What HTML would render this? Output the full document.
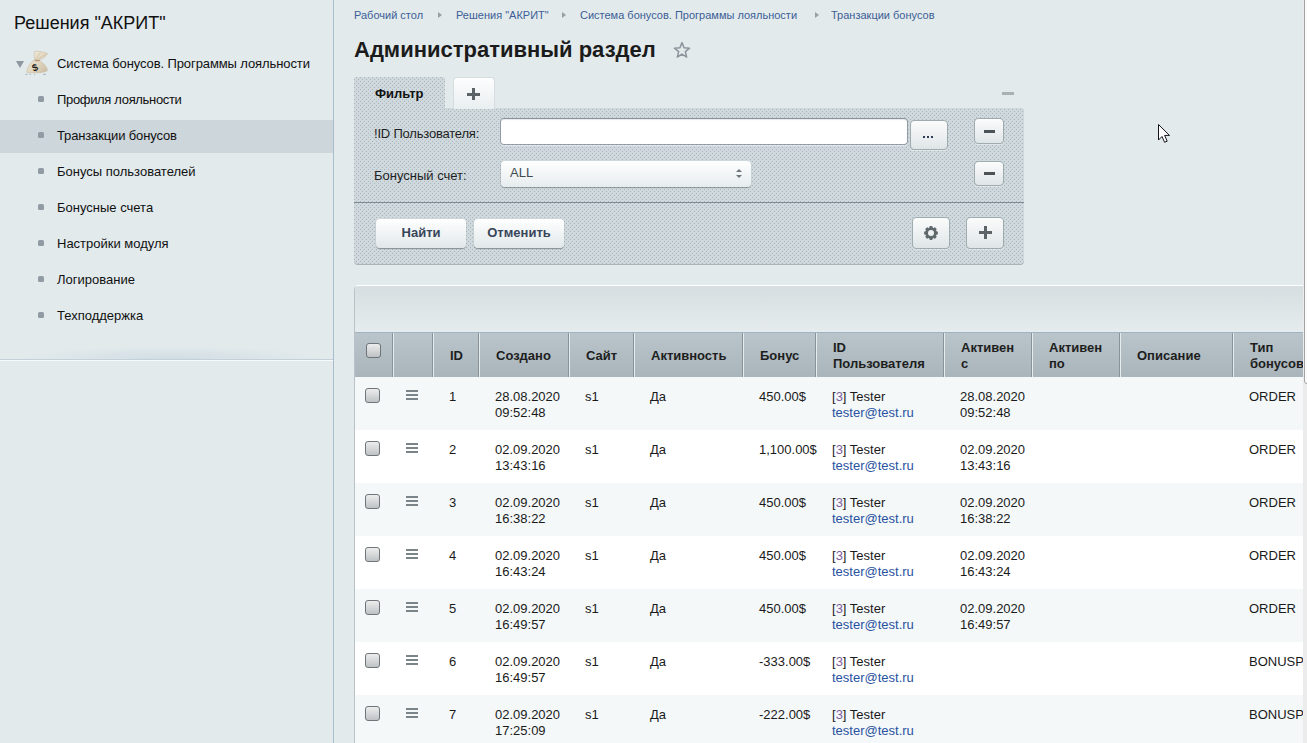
<!DOCTYPE html>
<html><head><meta charset="utf-8"><style>
*{box-sizing:border-box;margin:0;padding:0}
html,body{width:1307px;height:743px;overflow:hidden}
body{position:relative;background:#e2eaec;font-family:"Liberation Sans",sans-serif;font-size:13px;color:#000}
.abs{position:absolute}
#side{position:absolute;left:0;top:0;width:334px;height:743px;background:#e2eaec;border-right:1px solid #a9bccb}
#side .title{position:absolute;left:14px;top:12px;font-size:18px;line-height:22px;color:#111;white-space:nowrap}
.tri{position:absolute;left:16px;top:61px;width:0;height:0;border-left:4.5px solid transparent;border-right:4.5px solid transparent;border-top:7px solid #8e98a1}
#bag{position:absolute;left:25px;top:50px;width:25px;height:27px}
.mi{position:absolute;left:57px;white-space:nowrap;line-height:16px;color:#111}
.bul{position:absolute;left:38px;width:6px;height:6px;border-radius:1.5px;background:#909ba4}
#sel{position:absolute;left:0;top:120px;width:333px;height:33px;background:#cdd6db}
#sline{position:absolute;left:0;top:359px;width:333px;height:1px;background:#c3d0d8}
#sshadow{position:absolute;left:20px;top:346px;width:300px;height:13px;background:radial-gradient(ellipse 50% 100% at 50% 100%,rgba(150,175,195,.22),rgba(150,175,195,0))}
#sline2{position:absolute;left:0;top:360px;width:333px;height:1px;background:#f7fafb}
.bc{position:absolute;top:8px;font-size:11px;line-height:14px;color:#3d5e95;white-space:nowrap}
.bca{position:absolute;top:11.5px;width:0;height:0;border-top:3.5px solid transparent;border-bottom:3.5px solid transparent;border-left:4px solid #9a9fa3}
#h1{position:absolute;left:354px;top:37px;font-size:22px;font-weight:bold;line-height:26px;color:#1b1b1b;white-space:nowrap}
.pat{background:radial-gradient(circle at 1px 1px,#b3bec2 0.75px,transparent 1.1px) 0 0/4px 4px,radial-gradient(circle at 1px 1px,#b3bec2 0.75px,transparent 1.1px) 2px 2px/4px 4px,#d1d9dc}
#ftab{position:absolute;left:354px;top:77px;width:91px;height:32px;border-radius:4px 4px 0 0}
#ptab{position:absolute;left:453px;top:77px;width:42px;height:32px;border-radius:4px 4px 0 0;background:linear-gradient(#fdfefe,#e9eef0);border:1px solid #d6dde0;border-bottom:none}
#fpanel{position:absolute;left:354px;top:108px;width:670px;height:157px;border-radius:0 4px 4px 4px;box-shadow:0 1px 0 #b5c0c5}
.ttxt{font-weight:bold;line-height:16px;color:#111;white-space:nowrap}
.lbl{position:absolute;left:374px;white-space:nowrap;color:#1f1f1f;line-height:16px}
#inp{position:absolute;left:500px;top:118px;width:408px;height:27px;background:#fff;border-radius:4px;border:1px solid #939ca6;border-top-color:#8a949e;box-shadow:inset 0 1px 1px rgba(0,0,0,.1),0 1px 0 rgba(255,255,255,.45)}
#selbox{position:absolute;left:501px;top:161px;width:250px;height:26px;border-radius:4px;background:linear-gradient(#ffffff,#e6ecee);box-shadow:0 1px 1px rgba(0,0,0,.3),-0.5px 0 0 rgba(0,0,0,.12)}
#selbox span{position:absolute;left:9px;top:4px;line-height:16px;color:#404a50}
.sa1{position:absolute;left:235px;top:8px;border-left:3px solid transparent;border-right:3px solid transparent;border-bottom:3px solid #6d767b}
.sa2{position:absolute;left:235px;top:14px;border-left:3px solid transparent;border-right:3px solid transparent;border-top:3px solid #6d767b}
#fsep{position:absolute;left:354px;top:202px;width:670px;height:1px;background:#8e999e;box-shadow:0 1px 0 #e3e9eb}
.btn{position:absolute;border-radius:4px;background:linear-gradient(#ffffff,#e1e8ea);box-shadow:0 1px 1px rgba(0,0,0,.35)}
.btxt{font-weight:bold;color:#38465a;text-align:center;line-height:27px;white-space:nowrap}
.dots{position:absolute;left:12px;top:15px;width:10px;height:2px;background:linear-gradient(90deg,#2e3c58 2px,transparent 2px,transparent 4px,#2e3c58 4px,#2e3c58 6px,transparent 6px,transparent 8px,#2e3c58 8px)}
.minus{position:absolute;left:9px;top:11px;width:11px;height:3px;background:#4b5356}
#tbl{position:absolute;left:354px;top:285px;width:953px;height:470px;border-left:1px solid #b9c3c7;border-top:1px solid #fff;border-radius:5px 0 0 0;overflow:hidden;background:#f6f9f9}
#tool{position:absolute;left:0;top:0;width:100%;height:46px;background:linear-gradient(#d6dee1,#e6ecee)}
#thead{position:absolute;left:0;top:46px;width:100%;height:45px;background:linear-gradient(#b9c5ca,#a9b5ba);border-top:1px solid #9fb3c0}
.th{position:absolute;top:0;height:44px;font-weight:bold;color:#1e1e1e;line-height:16px;border-left:1px solid #e6ecee;box-shadow:-1px 0 0 #87939a}
.row{position:absolute;left:0;width:100%;height:53px}
.cell{position:absolute;top:12px;line-height:16px;white-space:nowrap;color:#1a1a1a}
.cb{position:absolute;width:15px;height:15px;border-radius:3px;border:1px solid #6f7579;background:linear-gradient(#ededed,#bec2c4)}
.hb{position:absolute;width:12px;height:11px}
.hb i{position:absolute;left:0;top:0;width:12px;height:2px;background:#7b8489}
.lnk{color:#2952a0}
.num{color:#7d5c9e}

.btn2{position:absolute;border-radius:4px;background:linear-gradient(#fbfcfc,#dfe5e7);border:1px solid #a0abaf;box-shadow:0 1px 0 rgba(255,255,255,.4)}

</style></head><body>
<div id="side">
<div class="title">Решения "АКРИТ"</div>
<div id="sel"></div>
<div class="tri"></div>
<div id="bag"><svg width="25" height="27" viewBox="0 0 25 27"><defs><linearGradient id="bg1" x1="0" y1="0" x2="1" y2="1"><stop offset="0" stop-color="#f3eee2"/><stop offset="0.55" stop-color="#e2d7c1"/><stop offset="1" stop-color="#c9bb9f"/></linearGradient></defs><path d="M10 9.6 C9.2 6.5 8.6 3.2 9.8 1 C13.5 1.3 18.5 1.8 22.6 3.4 C21 6.6 17.5 8.8 13.8 10.2 C18.2 12.6 22.4 16.8 22.3 20.8 C17 23.3 7 23.3 1.8 22.3 C2.2 16.6 5.5 12.2 10 9.6 Z" fill="url(#bg1)" stroke="#c4b394" stroke-width="0.5"/><path d="M11.5 9.5 C12.5 7 13.5 4.5 15.5 2.5 M12 9.8 C15 7.5 18 5.5 21.5 4" stroke="#cdbd9f" stroke-width="0.7" fill="none"/><path d="M9.8 10 C11.5 10.9 13.3 11 14.6 10.3" stroke="#b58c6a" stroke-width="1.1" fill="none"/><text x="7" y="21" font-family="Liberation Sans" font-weight="bold" font-size="10" fill="#1d1d1d" transform="rotate(-20 10 17)">$</text><path d="M0.5 24.5 L2.5 24.5 M4.5 24 L6 24.5 M9 24.8 L10 24.8 M18 24.3 L21 24.3" stroke="#a6b3c0" stroke-width="1"/></svg>
</div>
<div class="mi" style="top:56px;letter-spacing:-0.1px">Система бонусов. Программы лояльности</div>
<div class="bul" style="top:96px"></div>
<div class="mi" style="top:92px;letter-spacing:-0.33px">Профиля лояльности</div>
<div class="bul" style="top:132px"></div>
<div class="mi" style="top:128px;letter-spacing:-0.14px">Транзакции бонусов</div>
<div class="bul" style="top:168px"></div>
<div class="mi" style="top:164px;">Бонусы пользователей</div>
<div class="bul" style="top:204px"></div>
<div class="mi" style="top:200px;">Бонусные счета</div>
<div class="bul" style="top:240px"></div>
<div class="mi" style="top:236px;">Настройки модуля</div>
<div class="bul" style="top:276px"></div>
<div class="mi" style="top:272px;">Логирование</div>
<div class="bul" style="top:312px"></div>
<div class="mi" style="top:308px;">Техподдержка</div>
<div id="sshadow"></div><div id="sline"></div><div id="sline2"></div>
</div>
<div class="bc" style="left:354px">Рабочий стол</div>
<div class="bc" style="left:456px">Решения "АКРИТ"</div>
<div class="bc" style="left:580px">Система бонусов. Программы лояльности</div>
<div class="bc" style="left:831px">Транзакции бонусов</div>
<div class="bca" style="left:438px"></div>
<div class="bca" style="left:562px"></div>
<div class="bca" style="left:815px"></div>
<div id="h1">Административный раздел</div>
<svg class="abs" style="left:673px;top:41px" width="18" height="18" viewBox="0 0 18 18"><path d="M9.00 1.60 L11.06 6.77 L16.61 7.13 L12.33 10.68 L13.70 16.07 L9.00 13.10 L4.30 16.07 L5.67 10.68 L1.39 7.13 L6.94 6.77 Z" fill="none" stroke="#8b959c" stroke-width="1.5" stroke-linejoin="round"/></svg>
<svg class="abs" style="left:0;top:0" width="1307" height="743"><defs><pattern id="dp" x="0" y="1" width="4" height="4" patternUnits="userSpaceOnUse"><rect width="4" height="4" fill="#cfd9dd"/><rect x="0" y="0" width="1" height="1" fill="#aab5ba"/><rect x="2" y="2" width="1" height="1" fill="#aab5ba"/></pattern></defs><path d="M354 265 L354 81 Q354 77 358 77 L441 77 Q445 77 445 81 L445 108 L1020 108 Q1024 108 1024 112 L1024 261 Q1024 265 1020 265 L358 265 Q354 265 354 261 Z" fill="#a9b4b8"/><path d="M354 264 L354 81 Q354 77 358 77 L441 77 Q445 77 445 81 L445 108 L1020 108 Q1024 108 1024 112 L1024 260 Q1024 264 1020 264 L358 264 Q354 264 354 260 Z" fill="url(#dp)"/><rect x="354" y="202" width="670" height="1" fill="#7f8b90"/></svg>
<div id="ptab"></div>
<div class="abs" style="left:467px;top:93px;width:13px;height:3px;background:#5b6367"></div>
<div class="abs" style="left:472px;top:88px;width:3px;height:12px;background:#5b6367"></div>
<div class="abs" style="left:1002px;top:92px;width:12px;height:3px;background:#a9b1b4"></div>
<div class="abs ttxt" style="left:375px;top:86px">Фильтр</div>
<div class="lbl" style="top:126px;letter-spacing:-0.2px">!ID Пользователя:</div>
<div class="lbl" style="top:168px">Бонусный счет:</div>
<div id="inp"></div>
<div class="btn2" style="left:910px;top:120px;width:38px;height:30px"><div class="dots"></div></div>
<div class="btn2" style="left:974px;top:118px;width:30px;height:26px"><div class="minus"></div></div>
<div id="selbox"><span>ALL</span><div class="sa1"></div><div class="sa2"></div></div>
<div class="btn2" style="left:974px;top:161px;width:30px;height:25px"><div class="minus" style="top:10px"></div></div>
<div class="btn" style="left:376px;top:219px;width:90px;height:29px"><div class="btxt">Найти</div></div>
<div class="btn" style="left:474px;top:219px;width:90px;height:29px"><div class="btxt">Отменить</div></div>
<div class="btn2" style="left:912px;top:217px;width:38px;height:32px"><svg class="abs" style="left:11px;top:8px" width="14" height="14" viewBox="0 0 14 14"><g fill="#5f686c"><circle cx="7" cy="7" r="5.6"/><rect x="5.3" y="0.1" width="3.4" height="3" rx="1.2" transform="rotate(0 7 7)"/><rect x="5.3" y="0.1" width="3.4" height="3" rx="1.2" transform="rotate(45 7 7)"/><rect x="5.3" y="0.1" width="3.4" height="3" rx="1.2" transform="rotate(90 7 7)"/><rect x="5.3" y="0.1" width="3.4" height="3" rx="1.2" transform="rotate(135 7 7)"/><rect x="5.3" y="0.1" width="3.4" height="3" rx="1.2" transform="rotate(180 7 7)"/><rect x="5.3" y="0.1" width="3.4" height="3" rx="1.2" transform="rotate(225 7 7)"/><rect x="5.3" y="0.1" width="3.4" height="3" rx="1.2" transform="rotate(270 7 7)"/><rect x="5.3" y="0.1" width="3.4" height="3" rx="1.2" transform="rotate(315 7 7)"/></g><circle cx="7" cy="7" r="3" fill="#eef2f3"/></svg></div>
<div class="btn2" style="left:966px;top:217px;width:38px;height:32px"><div class="abs" style="left:12px;top:13px;width:13px;height:3px;background:#5b6367"></div><div class="abs" style="left:17px;top:8px;width:3px;height:13px;background:#5b6367"></div></div>
<div id="tbl">
<div id="tool"></div>
<div id="thead">
<div class="th" style="left:-1px;width:39px;border-left:none;"><div style="position:absolute;left:16px;top:15px;white-space:nowrap"></div></div>
<div class="th" style="left:38px;width:40px;"><div style="position:absolute;left:16px;top:15px;white-space:nowrap"></div></div>
<div class="th" style="left:78px;width:46px;"><div style="position:absolute;left:16px;top:15px;white-space:nowrap">ID</div></div>
<div class="th" style="left:124px;width:90px;"><div style="position:absolute;left:16px;top:15px;white-space:nowrap">Создано</div></div>
<div class="th" style="left:214px;width:65px;"><div style="position:absolute;left:16px;top:15px;white-space:nowrap">Сайт</div></div>
<div class="th" style="left:279px;width:109px;"><div style="position:absolute;left:16px;top:15px;white-space:nowrap">Активность</div></div>
<div class="th" style="left:388px;width:73px;"><div style="position:absolute;left:16px;top:15px;white-space:nowrap">Бонус</div></div>
<div class="th" style="left:461px;width:128px;"><div style="position:absolute;left:16px;top:7px;white-space:nowrap">ID<br>Пользователя</div></div>
<div class="th" style="left:589px;width:88px;"><div style="position:absolute;left:16px;top:7px;white-space:nowrap">Активен<br>с</div></div>
<div class="th" style="left:677px;width:88px;"><div style="position:absolute;left:16px;top:7px;white-space:nowrap">Активен<br>по</div></div>
<div class="th" style="left:765px;width:113px;"><div style="position:absolute;left:16px;top:15px;white-space:nowrap">Описание</div></div>
<div class="th" style="left:878px;width:167px;"><div style="position:absolute;left:16px;top:7px;white-space:nowrap">Тип<br>бонусов</div></div>
<div class="cb" style="left:11px;top:10px"></div>
</div>
<div class="row" style="top:91px;background:#f4f8f9">
<div class="cb" style="left:10px;top:11px"></div>
<div class="hb" style="left:51px;top:13px"><i></i><i style="top:4px"></i><i style="top:8px"></i></div>
<div class="cell" style="left:94px">1</div>
<div class="cell" style="left:140px">28.08.2020<br>09:52:48</div>
<div class="cell" style="left:230px">s1</div>
<div class="cell" style="left:295px">Да</div>
<div class="cell" style="left:404px">450.00$</div>
<div class="cell" style="left:477px">[<span class="num">3</span>] Tester<br><span class="lnk">tester@test.ru</span></div>
<div class="cell" style="left:605px">28.08.2020<br>09:52:48</div>
<div class="cell" style="left:894px">ORDER</div>
</div>
<div class="row" style="top:144px;background:#ffffff">
<div class="cb" style="left:10px;top:11px"></div>
<div class="hb" style="left:51px;top:13px"><i></i><i style="top:4px"></i><i style="top:8px"></i></div>
<div class="cell" style="left:94px">2</div>
<div class="cell" style="left:140px">02.09.2020<br>13:43:16</div>
<div class="cell" style="left:230px">s1</div>
<div class="cell" style="left:295px">Да</div>
<div class="cell" style="left:404px">1,100.00$</div>
<div class="cell" style="left:477px">[<span class="num">3</span>] Tester<br><span class="lnk">tester@test.ru</span></div>
<div class="cell" style="left:605px">02.09.2020<br>13:43:16</div>
<div class="cell" style="left:894px">ORDER</div>
</div>
<div class="row" style="top:197px;background:#f4f8f9">
<div class="cb" style="left:10px;top:11px"></div>
<div class="hb" style="left:51px;top:13px"><i></i><i style="top:4px"></i><i style="top:8px"></i></div>
<div class="cell" style="left:94px">3</div>
<div class="cell" style="left:140px">02.09.2020<br>16:38:22</div>
<div class="cell" style="left:230px">s1</div>
<div class="cell" style="left:295px">Да</div>
<div class="cell" style="left:404px">450.00$</div>
<div class="cell" style="left:477px">[<span class="num">3</span>] Tester<br><span class="lnk">tester@test.ru</span></div>
<div class="cell" style="left:605px">02.09.2020<br>16:38:22</div>
<div class="cell" style="left:894px">ORDER</div>
</div>
<div class="row" style="top:250px;background:#ffffff">
<div class="cb" style="left:10px;top:11px"></div>
<div class="hb" style="left:51px;top:13px"><i></i><i style="top:4px"></i><i style="top:8px"></i></div>
<div class="cell" style="left:94px">4</div>
<div class="cell" style="left:140px">02.09.2020<br>16:43:24</div>
<div class="cell" style="left:230px">s1</div>
<div class="cell" style="left:295px">Да</div>
<div class="cell" style="left:404px">450.00$</div>
<div class="cell" style="left:477px">[<span class="num">3</span>] Tester<br><span class="lnk">tester@test.ru</span></div>
<div class="cell" style="left:605px">02.09.2020<br>16:43:24</div>
<div class="cell" style="left:894px">ORDER</div>
</div>
<div class="row" style="top:303px;background:#f4f8f9">
<div class="cb" style="left:10px;top:11px"></div>
<div class="hb" style="left:51px;top:13px"><i></i><i style="top:4px"></i><i style="top:8px"></i></div>
<div class="cell" style="left:94px">5</div>
<div class="cell" style="left:140px">02.09.2020<br>16:49:57</div>
<div class="cell" style="left:230px">s1</div>
<div class="cell" style="left:295px">Да</div>
<div class="cell" style="left:404px">450.00$</div>
<div class="cell" style="left:477px">[<span class="num">3</span>] Tester<br><span class="lnk">tester@test.ru</span></div>
<div class="cell" style="left:605px">02.09.2020<br>16:49:57</div>
<div class="cell" style="left:894px">ORDER</div>
</div>
<div class="row" style="top:356px;background:#ffffff">
<div class="cb" style="left:10px;top:11px"></div>
<div class="hb" style="left:51px;top:13px"><i></i><i style="top:4px"></i><i style="top:8px"></i></div>
<div class="cell" style="left:94px">6</div>
<div class="cell" style="left:140px">02.09.2020<br>16:49:57</div>
<div class="cell" style="left:230px">s1</div>
<div class="cell" style="left:295px">Да</div>
<div class="cell" style="left:404px">-333.00$</div>
<div class="cell" style="left:477px">[<span class="num">3</span>] Tester<br><span class="lnk">tester@test.ru</span></div>
<div class="cell" style="left:894px">BONUSPAY</div>
</div>
<div class="row" style="top:409px;background:#f4f8f9">
<div class="cb" style="left:10px;top:11px"></div>
<div class="hb" style="left:51px;top:13px"><i></i><i style="top:4px"></i><i style="top:8px"></i></div>
<div class="cell" style="left:94px">7</div>
<div class="cell" style="left:140px">02.09.2020<br>17:25:09</div>
<div class="cell" style="left:230px">s1</div>
<div class="cell" style="left:295px">Да</div>
<div class="cell" style="left:404px">-222.00$</div>
<div class="cell" style="left:477px">[<span class="num">3</span>] Tester<br><span class="lnk">tester@test.ru</span></div>
<div class="cell" style="left:894px">BONUSPAY</div>
</div>
</div>
<div class="abs" style="left:1303px;top:0;width:4px;height:743px;background:#ececec"></div>
<div class="abs" style="left:1304px;top:-4px;width:8px;height:388px;border:1px solid #a3a3a3;border-radius:3px;background:#fbfbfb"></div>
<svg class="abs" style="left:1157px;top:123px" width="14" height="22" viewBox="0 0 14 22"><path d="M1.5 1.5 L1.5 17 L5 13.5 L7.6 19.3 L10.2 18.2 L7.6 12.4 L12.5 12.4 Z" fill="#fff" stroke="#141420" stroke-width="1" stroke-linejoin="round"/></svg>
</body></html>
